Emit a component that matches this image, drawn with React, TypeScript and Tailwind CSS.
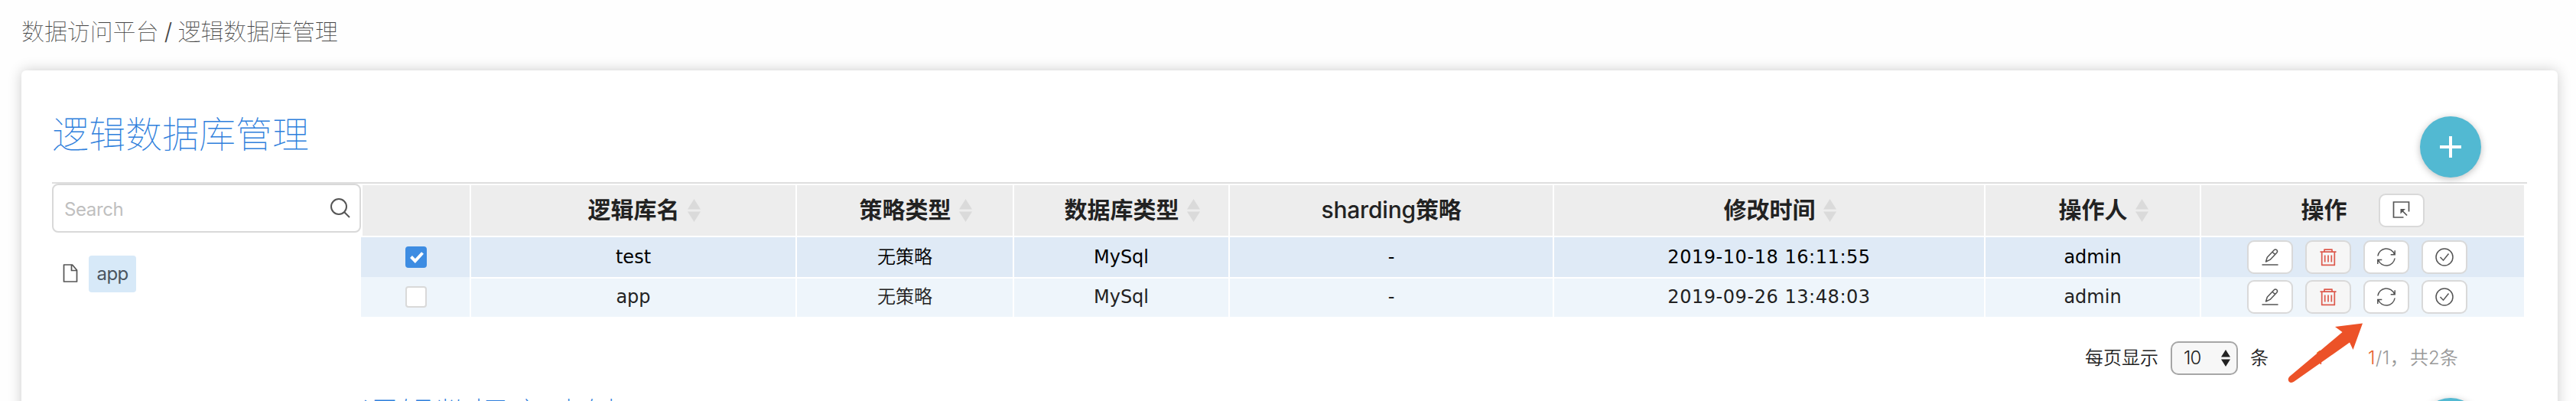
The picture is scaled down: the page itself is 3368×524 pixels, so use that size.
const CJK = "font-['Inter','Noto_Sans_CJK_SC',sans-serif]";
const CELL = "font-['DejaVu_Sans','Noto_Sans_CJK_SC',sans-serif]";

function SortIcon() {
  return (
    <svg className="mt-[1px] ml-[10px] h-[30px] w-[17px]" viewBox="0 0 17 30" fill="#dadada">
      <path d="M8.5 0 17 13.5H0z" />
      <path d="M8.5 30 17 16.5H0z" />
    </svg>
  );
}

function Heading({ label, sortable }: { label: string; sortable?: boolean }) {
  return (
    <div className={"flex items-center justify-center bg-[#ededed] pb-[2px] pl-[1px] text-[30px] font-bold text-[#222] " + CJK}>
      <span className={sortable ? "pl-[27px] leading-[44px]" : "leading-[44px]"}>{label}</span>
      {sortable && <SortIcon />}
    </div>
  );
}

function EditIcon() {
  return (
    <svg className="h-6 w-6" viewBox="0 0 24 24" fill="none" stroke="#555" strokeWidth="1.5" strokeLinejoin="round" strokeLinecap="round">
      <path d="M2 22h20M6.500 18l1.800-5.800L16.800 3.200c1.600-1.600 3.200-1.200 4-.400.9.9.9 2.300 0 3.400L12 15.400zM15 5.200l3.600 3.400" />
    </svg>
  );
}

function TrashIcon() {
  return (
    <svg className="h-6 w-6" viewBox="0 0 24 24" fill="none" stroke="#dd5a4d" strokeWidth="1.700" strokeLinejoin="round">
      <path d="M1.500 5.200h21M7 5V2.200h10V5M3.700 5.200v17.200h16.600V5.200M7.700 9.500v9M12 9.500v9M16.300 9.500v9" />
    </svg>
  );
}

function SyncIcon() {
  return (
    <svg className="h-6 w-6" viewBox="0 0 24 24" fill="none" stroke="#555" strokeWidth="1.500">
      <path d="M.9 10.500A11.200 11.200 0 0 1 22.500 8.300M23.200 3.200v5.500h-5.500M23.100 13.500A11.200 11.200 0 0 1 1.500 15.700M.8 21v-5.500h5.500" />
    </svg>
  );
}

function CheckIcon() {
  return (
    <svg className="h-6 w-6" viewBox="0 0 24 24" fill="none" stroke="#555" strokeWidth="1.500">
      <circle cx="12" cy="12" r="11" />
      <path d="M6.500 12l4 4.200L17.500 7.500" />
    </svg>
  );
}

function ActionButton({ children, muted }: { children: React.ReactNode; muted?: boolean }) {
  return (
    <button
      className={
        "flex h-[44px] w-[60px] items-center justify-center rounded-[9px] border-2 border-[#d9d9d9] " +
        (muted ? "bg-[#f6f6f6]" : "bg-white")
      }
    >
      {children}
    </button>
  );
}

const GRID =
  "grid grid-cols-[142px_424px_282px_280px_422px_562px_280px_422px] gap-x-[2px]";

type RowData = { name: string; type: string; db: string; shard: string; time: string; user: string; checked?: boolean };

const rows: RowData[] = [
  { name: "test", type: "无策略", db: "MySql", shard: "-", time: "2019-10-18 16:11:55", user: "admin", checked: true },
  { name: "app", type: "无策略", db: "MySql", shard: "-", time: "2019-09-26 13:48:03", user: "admin" },
];

function Row({ row, first }: { row: RowData; first: boolean }) {
  const bg = first ? "bg-[#dfeaf6]" : "bg-[#eef5fb]";
  const cell =
    "flex items-center justify-center " + bg + (first ? "" : " border-t-2 border-white pb-[2px]");
  return (
    <div className={GRID + " h-[52px] text-2xl " + CELL + (first ? " text-black" : " text-[#222]")}>
      <div className={"flex items-center justify-center pl-[2px] " + bg}>
        {row.checked ? (
          <span className="flex h-7 w-7 items-center justify-center rounded-[4px] bg-[#3d8ce2] pl-[2px]">
            <svg className="h-[15px] w-[18px]" viewBox="0 0 18 15" fill="none" stroke="#fff" strokeWidth="4">
              <path d="M1.500 6.500l5.300 5.500L16.500 1.500" />
            </svg>
          </span>
        ) : (
          <span className="h-7 w-7 rounded-[4px] border-2 border-[#d9d9d9] bg-white" />
        )}
      </div>
      <div className={cell}>{row.name}</div>
      <div className={cell + " font-[350]"}>{row.type}</div>
      <div className={cell}>{row.db}</div>
      <div className={cell}>{row.shard}</div>
      <div className={cell + " tracking-[0.55px]"}>{row.time}</div>
      <div className={cell}>{row.user}</div>
      <div className={"flex items-center justify-center gap-4 pr-[14px] " + bg}>
        <ActionButton><EditIcon /></ActionButton>
        <ActionButton muted><TrashIcon /></ActionButton>
        <ActionButton><SyncIcon /></ActionButton>
        <ActionButton><CheckIcon /></ActionButton>
      </div>
    </div>
  );
}

function AddButton() {
  return (
    <button className="flex h-20 w-20 shrink-0 items-center justify-center rounded-full bg-[#52b9d2] shadow-[0_2px_10px_rgba(0,0,0,0.25)]">
      <svg className="h-7 w-7" viewBox="0 0 28 28" stroke="#fff" strokeWidth="4">
        <path d="M14 0v28M0 14h28" />
      </svg>
    </button>
  );
}

export default function App() {
  return (
    <div className={"h-[524px] w-[3368px] overflow-hidden bg-[#fefefe] " + CJK}>
      <div className="h-[92px] pt-[19px] pl-[28px] text-[30px] leading-[44px] font-thin tracking-[-0.1px] [word-spacing:-1px] text-[#444]">
        数据访问平台 <span className="font-light">/</span> 逻辑数据库管理
      </div>
      <main className="ml-[28px] h-[600px] w-[3316px] rounded-[6px] bg-white pl-[40px] shadow-[0_0_18px_rgba(0,0,0,0.2)]">
        <header className="flex h-[146px] items-start justify-between pr-[100px]">
          <h1 className="pt-[48px] text-[48px] leading-[72px] font-thin text-[#2f7fdc]">逻辑数据库管理</h1>
          <div className="pt-[60px]"><AddButton /></div>
        </header>
        <div className="w-[3236px] border-t-2 border-[#dedede]">
          <div className="flex">
            <aside className="w-[404px]">
              <div className="flex h-16 items-center justify-between rounded-[8px] border-2 border-[#d9d9d9] pr-[12px] pl-[14px]">
                <span className="pt-[3px] text-2xl tracking-[-0.4px] text-[#bfbfbf]">Search</span>
                <svg className="mb-[1px] h-[26px] w-[26px]" viewBox="0 0 26 26" fill="none" stroke="#555" strokeWidth="2">
                  <circle cx="11" cy="11" r="10" />
                  <path d="M18 18l7 7" />
                </svg>
              </div>
              <div className="mt-[30px] flex h-12 items-center pl-[14px]">
                <svg className="mt-[-2px] h-6 w-[20px]" viewBox="0 0 20 24" fill="none" stroke="#555" strokeWidth="1.700" strokeLinejoin="round">
                  <path d="M1.500 1h11L18.500 8v15h-17zM11.500 1v7.500h7" />
                </svg>
                <span className="ml-[14px] flex h-12 w-[62px] items-center justify-center rounded-[4px] bg-[#d7e9f8] text-2xl tracking-[-0.7px] text-[#4a5560]">
                  app
                </span>
              </div>
            </aside>
            <section className="w-[2828px]">
              <div className={GRID + " my-[2px] h-[66px]"}>
                <div className="ml-[2px] bg-[#ededed]" />
                <Heading label="逻辑库名" sortable />
                <Heading label="策略类型" sortable />
                <Heading label="数据库类型" sortable />
                <div className="flex items-center justify-center bg-[#ededed] pb-[2px] text-[30px] text-[#222]">
                  <span className="font-medium tracking-[-0.2px]">sharding<span className="font-bold">策略</span></span>
                </div>
                <Heading label="修改时间" sortable />
                <Heading label="操作人" sortable />
                <div className="flex items-center justify-center bg-[#ededed] text-[30px] font-bold text-[#222]">
                  <span className="mr-[41px] pb-[2px]">操作</span>
                  <ActionButton>
                    <svg className="mr-[2px] mb-[2px] h-6 w-6" viewBox="0 0 24 24" fill="none" stroke="#555" strokeWidth="1.700">
                      <path d="M22.500 14.500V2H2.500v20H15.500" />
                      <path d="M20 19.500L13.500 13" />
                      <path d="M11.500 11h6.500l-6.500 6.500z" fill="#555" stroke="none" />
                    </svg>
                  </ActionButton>
                </div>
              </div>
              {rows.map((row, i) => (
                <Row key={row.name} row={row} first={i === 0} />
              ))}
              <div className="relative mt-[32px] flex h-[44px] items-center pl-[2254px] text-2xl font-[350] text-[#222]">
                <span>每页显示</span>
                <span className="ml-[16px] flex h-[44px] w-[88px] items-center justify-between rounded-[10px] border-2 border-[#a6a6a6] bg-[#f7f7f7] pr-[8px] pl-[15px]">
                  <span className="tracking-[-1px]">10</span>
                  <svg className="h-[22px] w-[12px]" viewBox="0 0 12 22" fill="#222">
                    <path d="M6 0l6 9.500H0zM6 22l6-9.500H0z" />
                  </svg>
                </span>
                <span className="ml-[16px]">条</span>
                <span className="w-[130px] pl-[62px] text-[#e8622c]">1</span>
                <span className="w-[55px] tracking-[0.5px] text-[#999]">
                  <span className="text-[#e8622c]">1</span>/1，
                </span>
                <span className="text-[#999]">共2条</span>
                <svg className="absolute top-[-24px] left-[2516px] h-[80px] w-[106px]" viewBox="0 0 106 80" fill="#ec5228">
                  <path d="M101 .500 65 5l9.500 7L5.500 70c-2 2-2.500 5-.500 7 2 1.500 4.500 1 6.500-.5L84 25.500 88.500 35z" />
                </svg>
              </div>
              <div className="flex h-[146px] items-start justify-between pt-[30px] pr-[56px]">
                <h2 className="mt-[-12px] text-[48px] leading-[72px] font-thin text-[#2f7fdc]">逻辑数据库映射</h2>
                <AddButton />
              </div>
            </section>
          </div>
        </div>
      </main>
    </div>
  );
}
